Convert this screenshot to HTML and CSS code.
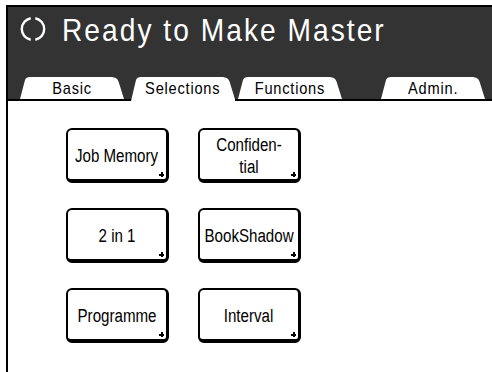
FILE: index.html
```html
<!DOCTYPE html>
<html lang="en">
<head>
    <meta charset="UTF-8">
    <meta name="viewport" content="width=device-width, initial-scale=1.0">
    <title>Ready to Make Master</title>
    <link rel="stylesheet" href="styles.css">
</head>
<body>
    <div class="screen">
        <!-- status + tabs -->
        <div class="header">
            <div class="title-row">
                <svg class="status-icon" width="26" height="26" viewBox="0 0 26 26">
                    <path d="M15.3 2.2 A11 11 0 0 1 15.3 23.8 M10.7 23.8 A11 11 0 0 1 10.7 2.2" fill="none" stroke="#fff" stroke-width="2.4"/>
                </svg>
                <span class="title">Ready to Make Master</span>
            </div>
            <div class="tabs">
                <div class="tab"><span class="narrow">Basic</span></div>
                <div class="tab tab-active"><span class="narrow">Selections</span></div>
                <div class="tab tab-functions"><span class="narrow">Functions</span></div>
                <div class="tab tab-admin"><span class="narrow">Admin.</span></div>
            </div>
        </div>

        <!-- selection buttons -->
        <div class="content">
            <div class="btn-grid">
                <button class="btn"><span class="narrow">Job Memory</span></button>
                <button class="btn"><span class="narrow">Confiden-<br>tial</span></button>
                <button class="btn"><span class="narrow">2 in 1</span></button>
                <button class="btn"><span class="narrow">BookShadow</span></button>
                <button class="btn"><span class="narrow">Programme</span></button>
                <button class="btn"><span class="narrow">Interval</span></button>
            </div>
        </div>
    </div>
</body>
</html>
```

FILE: styles.css
```css
body {
    margin: 0;
    background: #fff;
    font-family: "Liberation Sans", Arial, sans-serif;
    overflow: hidden;
}
.narrow {
    display: inline-block;
    white-space: nowrap;
    transform: scaleX(0.86);
}
.screen {
    margin: 5px 0 0 6px;
    height: 367px;
    border-left: 2px solid #000;
}
.header {
    background: #333;
    border-top: 2px solid #000;
}
.title-row {
    height: 70px;
    display: flex;
    align-items: flex-start;
    padding-left: 12px;
}
.status-icon {
    margin-top: 9px;
    flex: none;
}
.title {
    color: #fff;
    font-size: 32px;
    letter-spacing: 2.3px;
    white-space: nowrap;
    margin-left: 16px;
    margin-top: 5px;
    transform: scaleX(0.88);
    transform-origin: left center;
}
.tabs {
    display: flex;
    align-items: flex-end;
    padding-left: 12px;
    border-bottom: 2px solid #000;
}
.tab {
    width: 104px;
    height: 22px;
    display: flex;
    justify-content: center;
    line-height: 23px;
    background: #fff;
    color: #000;
    font-size: 17px;
    letter-spacing: 0.9px;
    clip-path: path("M0 22 L5 3 Q6 0 10 0 L90 0 C96 0 98 2 99 6 L104 22 Z");
}
.tab-active {
    height: 24px;
    margin-left: 7px;
    margin-bottom: -2px;
    padding-bottom: 2px;
    box-sizing: border-box;
    clip-path: path("M0 24 L5 3 Q6 0 10 0 L90 0 C96 0 98 2 99 6 L104.5 24 Z");
}
.tab-functions {
    margin-left: 3px;
}
.tab-admin {
    margin-left: 39px;
}
.content {
    padding: 27px 0 0 58px;
}
.btn-grid {
    display: grid;
    grid-template-columns: 103px 103px;
    grid-auto-rows: 55px;
    column-gap: 29px;
    row-gap: 25px;
}
.btn {
    position: relative;
    display: flex;
    align-items: center;
    justify-content: center;
    text-align: center;
    background: #fff;
    border: 2px solid #000;
    border-right-width: 3px;
    border-bottom-width: 4px;
    border-radius: 6px;
    padding: 3px 0 0;
    font-family: "Liberation Sans", Arial, sans-serif;
    font-size: 18px;
    line-height: 22px;
    color: #000;
}
.btn .narrow {
    transform: scaleX(0.84);
}
.btn::after {
    content: "";
    position: absolute;
    right: 2px;
    bottom: 2px;
    width: 5px;
    height: 5px;
    background:
        linear-gradient(#000, #000) center / 5px 2px no-repeat,
        linear-gradient(#000, #000) center / 2px 5px no-repeat;
}
```
